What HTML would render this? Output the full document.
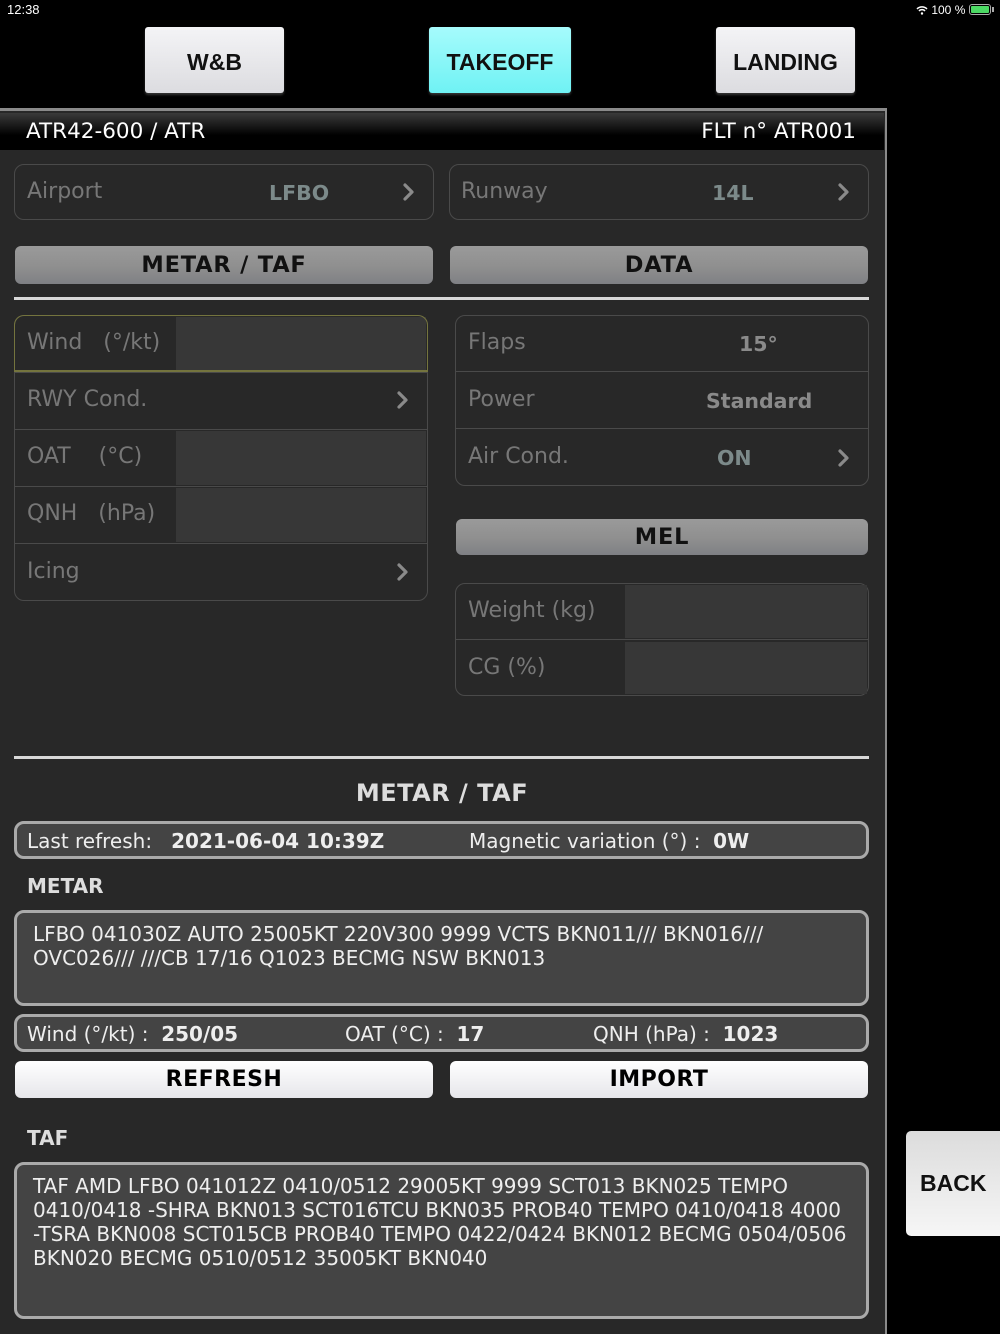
<!DOCTYPE html>
<html><head><meta charset="utf-8"><style>
*{margin:0;padding:0;box-sizing:border-box}
body{width:1000px;height:1334px;background:#000;position:relative;overflow:hidden;font-family:"DejaVu Sans","Liberation Sans",sans-serif;color:#fff}
.a{position:absolute}
.tab{position:absolute;top:27px;height:66px;border-radius:3px;background:linear-gradient(#f4f4f6,#dcdce0);color:#111;font-weight:bold;font-size:23px;display:flex;align-items:center;justify-content:center;padding-top:4px;font-family:"Liberation Sans",sans-serif;box-shadow:0 2px 2px #333}
.panel{position:absolute;left:0;top:108px;width:887px;height:1226px;background:#282828;border-top:3px solid #8a8a8a;border-right:2px solid #8a8a8a}
.hdr{position:absolute;left:0;top:113px;width:884px;height:37px;background:linear-gradient(#3a3a3a,#000 60%);font-size:21.5px;color:#fff}
.box{position:absolute;border:1.5px solid #4a4a4a;border-radius:10px}
.lbl{position:absolute;color:#777;font-size:22px}
.val{position:absolute;color:#7c8a8a;font-weight:bold;font-size:20.5px}
.chev{position:absolute;width:12px;height:18px}
.gbtn{position:absolute;height:38px;border-radius:6px;background:linear-gradient(#9a9a9a,#8f8f8f 55%,#7f8084);color:#111;font-weight:bold;font-size:22.5px;display:flex;align-items:center;justify-content:center;letter-spacing:.8px}
.row{position:absolute;height:57px;border-top:1.5px solid #4a4a4a}
.fill{position:absolute;background:#373737}
.line{position:absolute;height:3px;background:#d8d8d8;left:14px;width:855px}
.ibox{position:absolute;border:3px solid #aaa;border-radius:10px;background:#444;color:#eee;font-size:20px;white-space:nowrap}
.wbtn{position:absolute;height:37px;border-radius:6px;background:linear-gradient(#fff,#e6e6ea);color:#000;font-weight:bold;font-size:22px;display:flex;align-items:center;justify-content:center;letter-spacing:.5px}
b{font-weight:bold}
</style></head><body>
<svg width="0" height="0" style="position:absolute"><defs><symbol id="cv" viewBox="0 0 12 18"><path d="M3 2l7 7-7 7" stroke="#8a8a8a" stroke-width="3.2" fill="none" stroke-linecap="round" stroke-linejoin="round"/></symbol></defs></svg>
<div class="a" style="left:7px;top:2px;font-size:13px;font-family:'Liberation Sans',sans-serif">12:38</div>
<div class="a" style="left:916px;top:3px;font-size:12px;font-family:'Liberation Sans',sans-serif">
<svg width="12" height="10" viewBox="0 0 12 10" style="vertical-align:-1px"><path d="M1 4a7 7 0 0 1 10 0M3 6a4 4 0 0 1 6 0" stroke="#fff" stroke-width="1.5" fill="none"/><circle cx="6" cy="8.5" r="1.2" fill="#fff"/></svg> 100 %</div>
<div class="a" style="left:969px;top:4px;width:22px;height:11px;border:1px solid #aaa;border-radius:3px;padding:1px"><div style="width:100%;height:100%;background:#4cd964;border-radius:1px"></div></div>
<div class="a" style="left:992px;top:7px;width:2px;height:5px;background:#aaa"></div>

<div class="tab" style="left:145px;width:139px">W&amp;B</div>
<div class="tab" style="left:429px;width:142px;background:linear-gradient(#a6fbfc,#6ff2f4)">TAKEOFF</div>
<div class="tab" style="left:716px;width:139px">LANDING</div>

<div class="panel"></div>
<div class="hdr"><span class="a" style="left:26px;top:6px">ATR42-600 / ATR</span><span class="a" style="right:28px;top:6px">FLT n° ATR001</span></div>

<div class="box" style="left:14px;top:164px;width:420px;height:56px"></div>
<div class="lbl" style="left:27px;top:179px">Airport</div><div class="val" style="left:269px;top:181px">LFBO</div><svg class="chev" style="left:402px;top:183px"><use href="#cv"/></svg>
<div class="box" style="left:449px;top:164px;width:420px;height:56px"></div>
<div class="lbl" style="left:461px;top:179px">Runway</div><div class="val" style="left:712px;top:181px">14L</div><svg class="chev" style="left:837px;top:183px"><use href="#cv"/></svg>

<div class="gbtn" style="left:15px;top:246px;width:418px">METAR / TAF</div>
<div class="gbtn" style="left:450px;top:246px;width:418px">DATA</div>
<div class="line" style="top:297px"></div>

<div class="box" style="left:14px;top:315px;width:414px;height:286px"></div>
<div class="fill" style="left:176px;top:317px;width:250px;height:54px"></div>
<div class="box" style="left:14px;top:315px;width:414px;height:57px;border-color:#74743e;border-bottom-width:2px;border-radius:10px 10px 0 0"></div>
<div class="lbl" style="left:27px;top:330px">Wind&nbsp;&nbsp;&nbsp;(°/kt)</div>
<div class="row" style="left:15px;top:372px;width:412px"></div>
<div class="lbl" style="left:27px;top:387px">RWY Cond.</div><svg class="chev" style="left:396px;top:391px"><use href="#cv"/></svg>
<div class="row" style="left:15px;top:429px;width:412px"></div>
<div class="fill" style="left:176px;top:431px;width:250px;height:54px"></div>
<div class="lbl" style="left:27px;top:444px">OAT&nbsp;&nbsp;&nbsp;&nbsp;(°C)</div>
<div class="row" style="left:15px;top:486px;width:412px"></div>
<div class="fill" style="left:176px;top:488px;width:250px;height:54px"></div>
<div class="lbl" style="left:27px;top:501px">QNH&nbsp;&nbsp;&nbsp;(hPa)</div>
<div class="row" style="left:15px;top:543px;width:412px"></div>
<div class="lbl" style="left:27px;top:559px">Icing</div><svg class="chev" style="left:396px;top:563px"><use href="#cv"/></svg>

<div class="box" style="left:455px;top:315px;width:414px;height:171px"></div>
<div class="lbl" style="left:468px;top:330px">Flaps</div><div class="val" style="left:739px;top:332px;color:#8a8a8a">15°</div>
<div class="row" style="left:456px;top:371px;width:412px"></div>
<div class="lbl" style="left:468px;top:387px">Power</div><div class="val" style="left:706px;top:389px;color:#8a8a8a">Standard</div>
<div class="row" style="left:456px;top:428px;width:412px"></div>
<div class="lbl" style="left:468px;top:444px">Air Cond.</div><div class="val" style="left:717px;top:446px">ON</div><svg class="chev" style="left:837px;top:449px"><use href="#cv"/></svg>

<div class="gbtn" style="left:456px;top:519px;width:412px;height:36px">MEL</div>

<div class="box" style="left:455px;top:583px;width:414px;height:113px"></div>
<div class="fill" style="left:625px;top:585px;width:242px;height:53px"></div>
<div class="row" style="left:456px;top:639px;width:412px;height:2px"></div>
<div class="fill" style="left:625px;top:642px;width:242px;height:52px"></div>
<div class="lbl" style="left:468px;top:598px">Weight (kg)</div>
<div class="lbl" style="left:468px;top:655px">CG (%)</div>

<div class="line" style="top:756px"></div>
<div class="a" style="left:0;width:884px;text-align:center;top:779px;font-size:24px;font-weight:bold;color:#ddd;letter-spacing:.5px">METAR / TAF</div>

<div class="ibox" style="left:14px;top:821px;width:855px;height:38px">
<span class="a" style="left:10px;top:5px">Last refresh:&nbsp;&nbsp;&nbsp;<b>2021-06-04 10:39Z</b></span>
<span class="a" style="left:452px;top:5px">Magnetic variation (°) :&nbsp;&nbsp;<b>0W</b></span></div>

<div class="a" style="left:27px;top:874px;font-size:20px;font-weight:bold;color:#ddd">METAR</div>
<div class="ibox" style="left:14px;top:910px;width:855px;height:96px;padding:9px 0 0 16px;line-height:24px">LFBO 041030Z AUTO 25005KT 220V300 9999 VCTS BKN011/// BKN016///<br>OVC026/// ///CB 17/16 Q1023 BECMG NSW BKN013</div>

<div class="ibox" style="left:14px;top:1014px;width:855px;height:38px">
<span class="a" style="left:10px;top:5px">Wind (°/kt) :&nbsp;&nbsp;<b>250/05</b></span>
<span class="a" style="left:328px;top:5px">OAT (°C) :&nbsp;&nbsp;<b>17</b></span>
<span class="a" style="left:576px;top:5px">QNH (hPa) :&nbsp;&nbsp;<b>1023</b></span></div>

<div class="wbtn" style="left:15px;top:1061px;width:418px">REFRESH</div>
<div class="wbtn" style="left:450px;top:1061px;width:418px">IMPORT</div>

<div class="a" style="left:27px;top:1126px;font-size:20px;font-weight:bold;color:#ddd">TAF</div>
<div class="ibox" style="left:14px;top:1162px;width:855px;height:157px;padding:9px 0 0 16px;line-height:24px">TAF AMD LFBO 041012Z 0410/0512 29005KT 9999 SCT013 BKN025 TEMPO<br>0410/0418 -SHRA BKN013 SCT016TCU BKN035 PROB40 TEMPO 0410/0418 4000<br>-TSRA BKN008 SCT015CB PROB40 TEMPO 0422/0424 BKN012 BECMG 0504/0506<br>BKN020 BECMG 0510/0512 35005KT BKN040</div>

<div class="a" style="left:906px;top:1131px;width:100px;height:105px;border-radius:5px;background:linear-gradient(#dcdcdc,#f6f6f6);color:#111;font-weight:bold;font-size:23px;display:flex;align-items:center;padding-left:14px;font-family:'Liberation Sans',sans-serif">BACK</div>
</body></html>
